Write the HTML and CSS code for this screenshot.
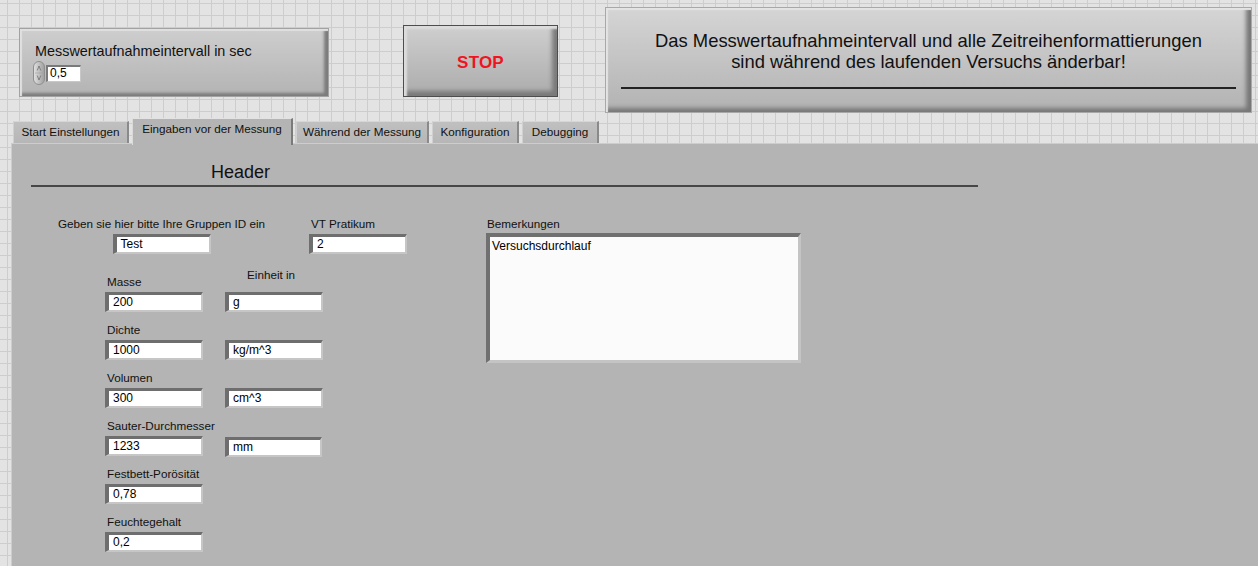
FILE: index.html
```html
<!DOCTYPE html>
<html lang="de">
<head>
<meta charset="utf-8">
<title>Front Panel</title>
<link rel="stylesheet" href="styles.css">
</head>
<body>
<div class="top">
  <div class="ctrl1">
    <div class="ctrl1-label">Messwertaufnahmeintervall in sec</div>
    <div class="numeric">
      <svg class="spin" width="12" height="24" viewBox="0 0 12 24">
        <defs>
          <linearGradient id="spg" x1="0" x2="1" y1="0" y2="0">
            <stop offset="0" stop-color="#e2e2e2"/>
            <stop offset="1" stop-color="#9e9e9e"/>
          </linearGradient>
        </defs>
        <rect x="0.5" y="0.5" width="11" height="23" rx="5.5" fill="url(#spg)" stroke="#8e8e8e"/>
        <path d="M4.2 9.5 L6 5 L7.8 9.5" fill="none" stroke="#6e6e6e" stroke-width="0.8"/>
        <line x1="2" y1="12" x2="10" y2="12" stroke="#a0a0a0" stroke-width="0.6"/>
        <path d="M4.2 14.5 L6 19 L7.8 14.5" fill="none" stroke="#6e6e6e" stroke-width="0.8"/>
      </svg>
      <div class="num-field">0,5</div>
    </div>
  </div>
  <div class="stop"><span>STOP</span></div>
  <div class="note">
    <p class="note-text">Das Messwertaufnahmeintervall und alle Zeitreihenformattierungen<br>sind während des laufenden Versuchs änderbar!</p>
    <div class="note-line"></div>
  </div>
</div>

<div class="tabs">
  <div class="tab t1">Start Einstellungen</div>
  <div class="tab active t2">Eingaben vor der Messung</div>
  <div class="tab t3">Während der Messung</div>
  <div class="tab t4">Konfiguration</div>
  <div class="tab t5">Debugging</div>
</div>

<div class="panel">
  <div class="header">Header</div>
  <div class="header-line"></div>

  <div class="body">
    <div class="left-col">
      <div class="top-row">
        <div class="fld fld-center">
          <div class="lbl">Geben sie hier bitte Ihre Gruppen ID ein</div>
          <div class="inp">Test</div>
        </div>
        <div class="fld fld-vt">
          <div class="lbl lbl-vt">VT Pratikum</div>
          <div class="inp">2</div>
        </div>
      </div>

      <div class="form">
        <div class="fld"><div class="lbl lbl-f">Masse</div><div class="inp">200</div></div>
        <div class="fld"><div class="lbl lbl-unit">Einheit in</div><div class="inp">g</div></div>

        <div class="fld"><div class="lbl lbl-f">Dichte</div><div class="inp">1000</div></div>
        <div class="fld"><div class="inp">kg/m^3</div></div>

        <div class="fld"><div class="lbl lbl-f">Volumen</div><div class="inp">300</div></div>
        <div class="fld"><div class="inp">cm^3</div></div>

        <div class="fld"><div class="lbl lbl-f">Sauter-Durchmesser</div><div class="inp">1233</div></div>
        <div class="fld"><div class="inp inp-mm">mm</div></div>

        <div class="fld"><div class="lbl lbl-f">Festbett-Porösität</div><div class="inp">0,78</div></div>
        <div class="fld"></div>

        <div class="fld"><div class="lbl lbl-f">Feuchtegehalt</div><div class="inp">0,2</div></div>
        <div class="fld"></div>
      </div>
    </div>

    <div class="right-col">
      <div class="lbl lbl-memo">Bemerkungen</div>
      <div class="memo">Versuchsdurchlauf</div>
    </div>
  </div>
</div>
</body>
</html>
```

FILE: styles.css
```css
* { box-sizing: border-box; }

html, body { margin: 0; padding: 0; }

body {
  width: 1258px;
  height: 566px;
  overflow: hidden;
  font-family: "Liberation Sans", Arial, sans-serif;
  color: #111;
  background-color: #e3e3e3;
  background-image:
    linear-gradient(to right, #cdcdcd 1px, transparent 1px),
    linear-gradient(to bottom, #cdcdcd 1px, transparent 1px);
  background-size: 12px 12px;
  background-position: 7px 3px;
}

/* ---------- top row ---------- */
.top {
  display: flex;
  align-items: flex-start;
  height: 117px;
}

.ctrl1 {
  margin: 28px 0 0 19px;
  width: 310px;
  height: 69px;
  padding: 14px 0 0 13px;
  border: 1px solid #a2a2a2;
  background: linear-gradient(#cecece, #b3b3b3);
  box-shadow: inset 2px 2px 1px #e0e0e0, inset -4px -3px 3px #7c7c7c;
}

.ctrl1-label {
  margin-left: 2px;
  font-size: 14.4px;
  line-height: 17px;
  color: #111;
}

.numeric {
  display: flex;
  align-items: center;
  margin-top: 1px;
}

.spin { display: block; flex: none; }

.num-field {
  width: 35px;
  height: 17px;
  margin-left: 1px;
  background: #fff;
  border-style: solid;
  border-width: 2px 1px 1px 2px;
  border-color: #7a7a7a #c8c8c8 #c8c8c8 #7a7a7a;
  font-size: 12px;
  line-height: 13px;
  padding-left: 2px;
  color: #000;
}

.stop {
  margin: 25px 0 0 74px;
  width: 155px;
  height: 72px;
  padding-top: 3px;
  display: flex;
  align-items: center;
  justify-content: center;
  border: 1px solid #4d4d4d;
  background: linear-gradient(#cfcfcf, #acacac);
  box-shadow: inset 3px 3px 2px #dcdcdc, inset -5px -5px 4px #7a7a7a;
}

.stop span {
  color: #f0141e;
  font-weight: bold;
  font-size: 17px;
  letter-spacing: 0.2px;
}

.note {
  margin: 7px 0 0 47px;
  width: 647px;
  height: 106px;
  padding-top: 22px;
  border: 1px solid #a8a8a8;
  background: linear-gradient(#d5d5d5, #b2b2b2);
  box-shadow: inset 2px 2px 1px #e4e4e4, inset -5px -4px 4px #777;
}

.note-text {
  margin: 0;
  text-align: center;
  font-size: 18.4px;
  line-height: 21px;
  color: #111;
}

.note-line {
  margin: 15px 15px 0 15px;
  height: 2px;
  background: #222;
}

/* ---------- tabs ---------- */
.tabs {
  display: flex;
  align-items: flex-end;
  gap: 3px;
  height: 26px;
  padding-left: 13px;
}

.tab {
  height: 22px;
  font-size: 11.7px;
  line-height: 20px;
  text-align: center;
  color: #111;
  white-space: nowrap;
  background: linear-gradient(#c0c0c0, #b6b6b6);
  border-top: 1px solid #d6d6d6;
  border-left: 1px solid #d0d0d0;
  border-right: 2px solid #8a8a8a;
}

.t1 { width: 116px; }
.t2 { width: 161px; }
.t3 { width: 133px; }
.t4 { width: 87px; }
.t5 { width: 77px; }

.tab.active {
  position: relative;
  z-index: 2;
  height: 27px;
  margin-bottom: -2px;
  line-height: 20px;
  background: #b4b4b4;
  border-top: 1px solid #e2e2e2;
  border-left: 1px solid #dadada;
  border-right: 2px solid #7a7a7a;
}

/* ---------- panel ---------- */
.panel {
  margin-left: 11px;
  width: 1247px;
  height: 423px;
  background: #b4b4b4;
  border-top: 1px solid #cdcdcd;
  border-left: 1px solid #cdcdcd;
}

.header {
  margin: 18px 0 0 199px;
  font-size: 18px;
  line-height: 20px;
  color: #111;
}

.header-line {
  margin: 3px 0 0 19px;
  width: 947px;
  height: 2px;
  background: #474747;
}

.body {
  display: flex;
  align-items: flex-start;
  margin-top: 30px;
}

.left-col {
  margin-left: 46px;
  width: 350px;
}

.top-row {
  display: flex;
  align-items: flex-end;
}

.fld {
  display: flex;
  flex-direction: column;
}

.fld-center {
  width: 207px;
  align-items: center;
}

.fld-vt {
  margin-left: 44px;
}

.lbl {
  font-size: 11.7px;
  line-height: 14px;
  margin-bottom: 3px;
  color: #111;
  white-space: nowrap;
}

.lbl-vt { padding-left: 2px; }

.lbl-f { padding-left: 2px; }

.lbl-unit {
  padding-left: 22px;
  margin-bottom: 10px;
}

.inp {
  width: 98px;
  height: 20px;
  background: #fff;
  border-style: solid;
  border-width: 3px 2px 2px 4px;
  border-color: #6e6e6e #c6c6c6 #c6c6c6 #6e6e6e;
  font-size: 12px;
  line-height: 15px;
  padding-left: 4px;
  color: #000;
  white-space: nowrap;
}

.inp-mm {
  width: 97px;
  margin-bottom: -1px;
}

.form {
  display: grid;
  grid-template-columns: 98px 98px;
  column-gap: 22px;
  row-gap: 11px;
  align-items: end;
  margin: 14px 0 0 47px;
}

.right-col {
  margin-left: 78px;
}

.lbl-memo {
  padding-left: 1px;
  margin-bottom: 2px;
}

.memo {
  width: 315px;
  height: 130px;
  background: #fbfbfb;
  border-style: solid;
  border-width: 4px 3px 3px 4px;
  border-color: #707070 #c4c4c4 #c4c4c4 #707070;
  padding: 2px 2px;
  font-size: 12px;
  line-height: 14px;
  color: #000;
}
```
